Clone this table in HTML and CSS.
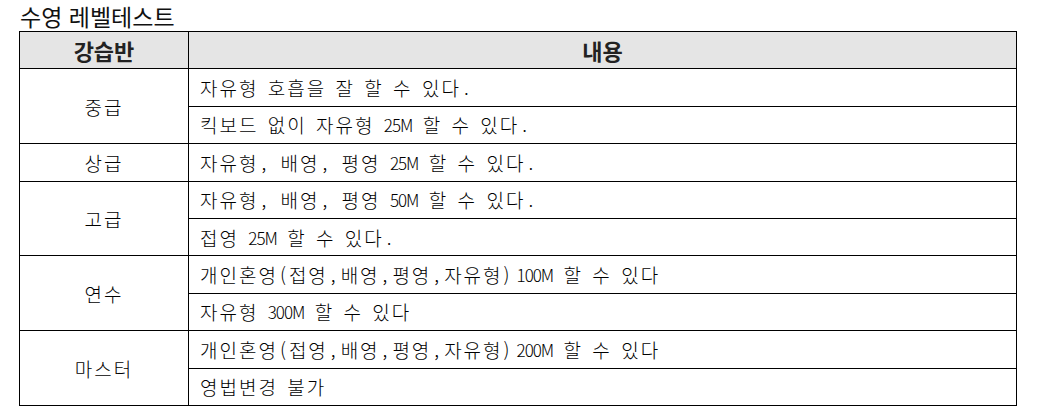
FILE: index.html
```html
<!DOCTYPE html>
<html lang="ko">
<head>
<meta charset="utf-8">
<title>수영 레벨테스트</title>
<link rel="stylesheet" href="styles.css">
</head>
<body>
<h1 class="title">수영 레벨테스트</h1>
<div class="grid">
  <div class="cell head">강습반</div>
  <div class="cell head">내용</div>

  <div class="cell level span2">중급</div>
  <div class="cell desc">자유형 호흡을 잘 할 수 있다<span class="p">.</span></div>
  <div class="cell desc">킥보드 없이 자유형 <span class="n">25M</span> 할 수 있다<span class="p">.</span></div>

  <div class="cell level">상급</div>
  <div class="cell desc">자유형<span class="p">,</span> 배영<span class="p">,</span> 평영 <span class="n">25M</span> 할 수 있다<span class="p">.</span></div>

  <div class="cell level span2">고급</div>
  <div class="cell desc">자유형<span class="p">,</span> 배영<span class="p">,</span> 평영 <span class="n">50M</span> 할 수 있다<span class="p">.</span></div>
  <div class="cell desc">접영 <span class="n">25M</span> 할 수 있다<span class="p">.</span></div>

  <div class="cell level span2">연수</div>
  <div class="cell desc">개인혼영<span class="p open">(</span>접영<span class="p">,</span>배영<span class="p">,</span>평영<span class="p">,</span>자유형<span class="p close">)</span> <span class="n">100M</span> 할 수 있다</div>
  <div class="cell desc">자유형 <span class="n">300M</span> 할 수 있다</div>

  <div class="cell level span2">마스터</div>
  <div class="cell desc">개인혼영<span class="p open">(</span>접영<span class="p">,</span>배영<span class="p">,</span>평영<span class="p">,</span>자유형<span class="p close">)</span> <span class="n">200M</span> 할 수 있다</div>
  <div class="cell desc">영법변경 불가</div>
</div>
</body>
</html>
```
FILE: styles.css
```css
html, body {
  margin: 0;
  padding: 0;
  background: #fff;
}
body {
  padding: 2px 0 0 19px;
  font-family: "Noto Sans CJK KR", "Noto Sans", sans-serif;
  color: #000;
}
.title {
  margin: 0 0 0 1px;
  font-size: 23px;
  font-weight: 400;
  line-height: 29px;
  height: 29px;
  color: #111;
}
.grid {
  width: 998px;
  height: 375px;
  box-sizing: border-box;
  padding: 1px;
  background: #000;
  display: grid;
  grid-template-columns: 168px 1fr;
  grid-template-rows: repeat(10, 1fr);
  gap: 1px;
}
.cell {
  background: #fff;
  display: flex;
  align-items: center;
  white-space: pre;
  font-size: 19px;
  font-weight: 300;
  letter-spacing: 2px;
  word-spacing: 2px;
}
.head {
  background: #e5e5e5;
  justify-content: center;
  font-size: 22px;
  font-weight: 700;
  letter-spacing: 0;
  word-spacing: 0;
  color: #222;
}
.level {
  justify-content: center;
}
.span2 {
  grid-row: span 2;
}
.desc {
  padding-left: 11px;
}
.p {
  padding: 0 3px;
}
.open {
  padding: 0 1px 0 2px;
}
.close {
  padding: 0 5px 0 1px;
}
.n {
  font-size: 17px;
  letter-spacing: -1px;
  padding-right: 1px;
}
```
